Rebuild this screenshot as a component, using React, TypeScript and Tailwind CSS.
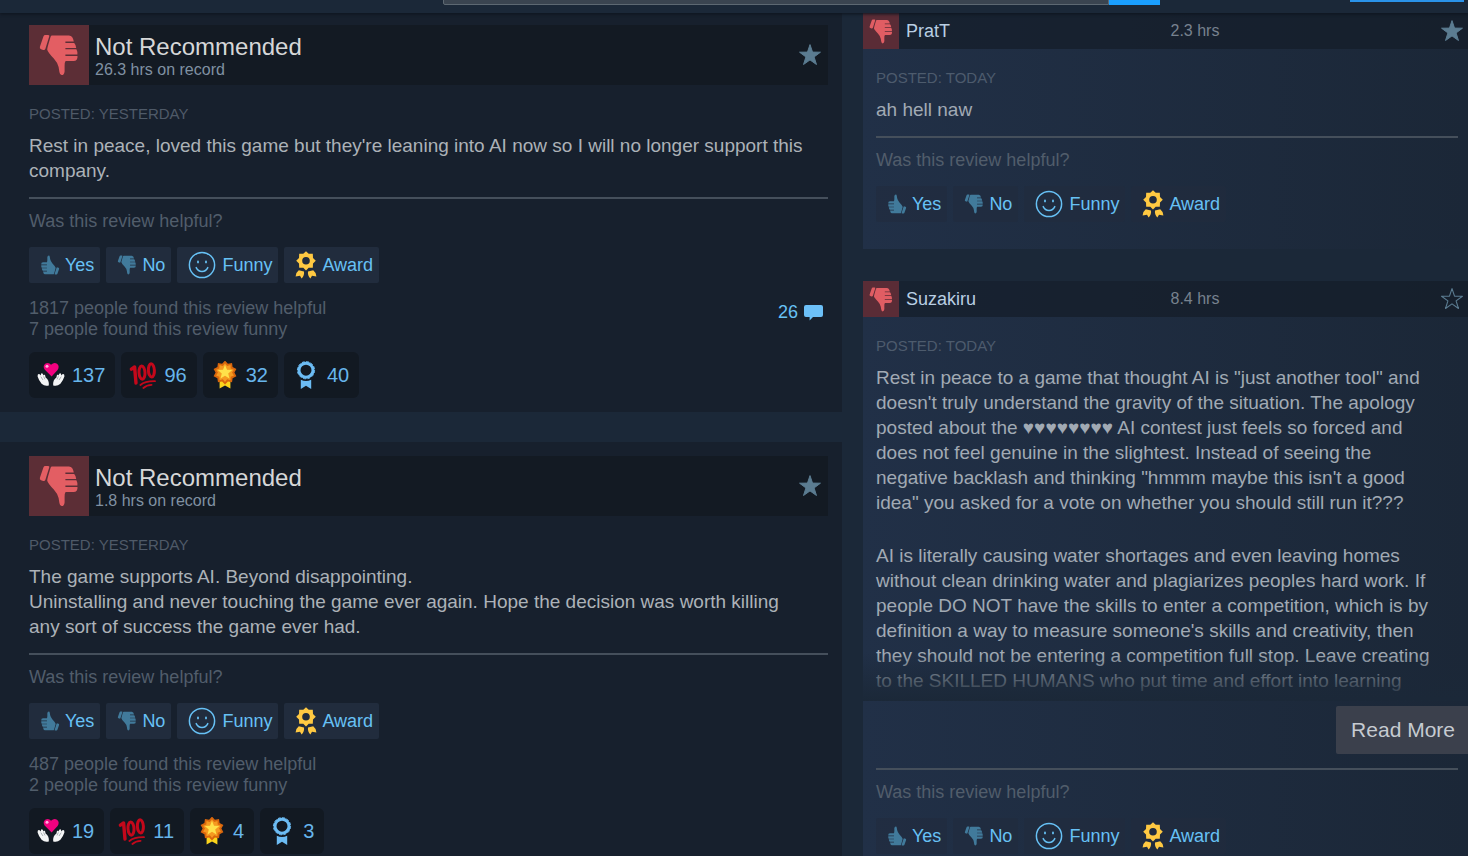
import type { ReactNode } from 'react';

type Award = { kind: 'care' | 'hundred' | 'medal' | 'ribbon'; count: number };

const starPoints = (count: number, outer: number, inner: number, cx: number, cy: number) =>
    Array.from({ length: count * 2 }, (_, i) => {
        const r = i % 2 === 0 ? outer : inner;
        const a = (Math.PI * i) / count - Math.PI / 2;
        return `${(cx + r * Math.cos(a)).toFixed(2)},${(cy + r * Math.sin(a)).toFixed(2)}`;
    }).join(' ');

function Thumb({ className }: { className: string }) {
    return (
        <svg viewBox="10 10 40 42" className={className} fill="currentColor" aria-hidden="true">
            <path d="M16.4 11H19.2Q20.8 11 20.2 12.6L16.4 24.8Q15.8 26.4 14.2 26L12 25.2Q10.4 24.6 10.9 22.8L14.4 12.4Q14.9 11 16.4 11Z" />
            <path d="M23 11.6H40Q43.8 11.8 44.8 17.6H36.4V18.9H45.2Q46.8 20.2 47.2 24H36.4V25.3H47.4Q48.6 27.4 48.4 30.6H36.4V31.9H48.5Q48.8 37 44.6 37H36.6Q35.4 38.4 35.6 42V47.4Q35.2 51 32.6 51Q30.8 51 30.4 48L29.6 43Q28.6 38.6 24.8 34.4Q18.6 28 18.2 25.4Q18.2 24 21.6 12.8Q22 11.6 23 11.6Z" />
        </svg>
    );
}

function Star({ outline }: { outline?: boolean }) {
    return (
        <svg
            viewBox="0 0 24 24"
            className="size-6 shrink-0 text-[#5b7c91]"
            fill={outline ? 'none' : 'currentColor'}
            stroke="currentColor"
            strokeWidth={outline ? 1.1 : 1}
            strokeLinejoin="round"
            aria-hidden="true"
        >
            <polygon points={starPoints(5, 11, 4.3, 12, 12.6)} />
        </svg>
    );
}

function Smiley() {
    return (
        <svg viewBox="0 0 28 28" className="size-7" fill="none" stroke="currentColor" strokeWidth="1.5" strokeLinecap="round" aria-hidden="true">
            <circle cx="14" cy="14" r="12.6" />
            <path d="M8.2 16.6Q10 20.4 14 20.4T19.8 16.6" />
            <path d="M10 10.4V11.4M18 10.4V11.4" strokeWidth="1.8" />
        </svg>
    );
}

function AwardRosette() {
    return (
        <svg viewBox="0 0 22 28" className="h-7 w-[22px]" fill="#ffc942" aria-hidden="true">
            <path
                fillRule="evenodd"
                d="M11 0.2L13.7 2.8L17.8 2.8L18 7L20.8 9.8L18 12.6L17.8 16.8L13.7 16.8L11 19.4L8.3 16.8L4.2 16.8L4 12.6L1.2 9.8L4 7L4.2 2.8L8.3 2.8ZM11 6A3.8 3.8 0 1 0 11 13.6A3.8 3.8 0 1 0 11 6Z"
            />
            <path d="M3.8 19.2L9 20.6Q9.6 24.6 6.6 27.6L5 24.8L0.6 25.4Q0.8 21.4 3.8 19.2ZM18.2 19.2L13 20.6Q12.4 24.6 15.4 27.6L17 24.8L21.4 25.4Q21.2 21.4 18.2 19.2Z" />
        </svg>
    );
}

function AwardIcon({ kind }: { kind: Award['kind'] }) {
    if (kind === 'care') {
        return (
            <svg viewBox="0 0 28 28" className="size-7" aria-hidden="true">
                <path d="M14.6 15.6L7.6 8.6Q5.4 4.6 8.6 2.6Q11.8 1 14 3.8Q17.2 0.8 20 2.8Q23 5.4 20.6 9Z" fill="#f2017f" />
                <circle cx="10" cy="5.2" r="1.5" fill="#ffb0dc" />
                <path
                    d="M1.6 13Q3 12.6 3.6 14.6L4.2 12.4Q6 12 6.4 14.6L7 13.4Q8.4 13.6 8.6 16.4Q12.4 19 11.8 24.4Q8 25.8 4.6 22.8Q1.8 19.6 0.6 15.6Q0.4 13.4 1.6 13ZM26.4 13Q25 12.6 24.4 14.6L23.8 12.4Q22 12 21.6 14.6L21 13.4Q19.6 13.6 19.4 16.4Q15.6 19 16.2 24.4Q20 25.8 23.4 22.8Q26.2 19.6 27.4 15.6Q27.6 13.4 26.4 13Z"
                    fill="#f4f5f6"
                />
                <path d="M3.8 15.6L6 19M6.6 15.4L8 18.4M24.2 15.6L22 19M21.4 15.4L20 18.4" stroke="#8b9298" strokeWidth="0.7" />
            </svg>
        );
    }
    if (kind === 'hundred') {
        return (
            <svg viewBox="0 0 28 28" className="size-7" fill="none" stroke="#c4081b" strokeLinecap="round" strokeLinejoin="round" aria-hidden="true">
                <path d="M2.4 8.2L5.6 6L7 22" strokeWidth="3.4" />
                <ellipse cx="13" cy="11.6" rx="3" ry="6.6" strokeWidth="3" transform="rotate(-3 13 11.6)" />
                <ellipse cx="22.4" cy="9.4" rx="3" ry="6.6" strokeWidth="3" transform="rotate(-3 22.4 9.4)" />
                <path d="M11.4 24Q16 20 26 20.2M14.4 27Q17.6 24 22.6 23.8" strokeWidth="1.8" />
            </svg>
        );
    }
    if (kind === 'medal') {
        return (
            <svg viewBox="0 0 28 28" className="size-7" aria-hidden="true">
                <path d="M8.6 17H19.4V27.6L14 24.6L8.6 27.6Z" fill="#fbd51c" />
                <polygon points={starPoints(10, 12, 9.4, 14, 11.6)} fill="#d9660c" />
                <polygon points={starPoints(10, 9.4, 7, 14, 11.6)} fill="#f59a20" />
                <polygon points={starPoints(5, 7.6, 3.4, 14, 11.4)} fill="#ffe14a" />
            </svg>
        );
    }
    return (
        <svg viewBox="0 0 28 28" className="size-7" fill="#6cbcf4" aria-hidden="true">
            <circle cx="14" cy="9.2" r="7" fill="none" stroke="#6cbcf4" strokeWidth="3" />
            <circle cx="14" cy="9.2" r="8.6" fill="none" stroke="#6cbcf4" strokeWidth="1" strokeDasharray="2.8 1.7" />
            <path d="M8.8 18.8Q14 21.2 19.2 18.8V28L14 24.8L8.8 28Z" />
        </svg>
    );
}

function VoteButton({ children, side }: { children: ReactNode; side?: boolean }) {
    return (
        <button
            type="button"
            className={`flex h-9 items-center gap-[5px] rounded-xs pr-[6px] pl-[11px] text-[18px] text-[#67c1f5] ${side ? 'bg-[#212c3d]/60' : 'bg-[#212c3d]'}`}
        >
            {children}
        </button>
    );
}

function VoteControls({ side }: { side?: boolean }) {
    return (
        <div className="mt-[14px] border-t-2 border-[#454f5b] pt-3">
            <p className="text-[18px] leading-5 text-[#515d6b]">Was this review helpful?</p>
            <div className="mt-4 flex gap-[6px]">
                <VoteButton side={side}>
                    <Thumb className="size-5 rotate-180 text-[#417a9b]" />
                    Yes
                </VoteButton>
                <VoteButton side={side}>
                    <Thumb className="size-5 text-[#417a9b]" />
                    No
                </VoteButton>
                <VoteButton side={side}>
                    <Smiley />
                    <span className="pl-px">Funny</span>
                </VoteButton>
                <VoteButton side={side}>
                    <AwardRosette />
                    Award
                </VoteButton>
            </div>
        </div>
    );
}

type ReviewProps = {
    hours: string;
    helpful: number;
    funny: number;
    comments?: number;
    awards: Award[];
    children: ReactNode;
    className: string;
};

function Review({ hours, helpful, funny, comments, awards, children, className }: ReviewProps) {
    return (
        <article className={`bg-[#17202d] pr-[14px] pb-[14px] pl-[29px] ${className}`}>
            <header className="flex items-center bg-[#131a23] pr-[6px]">
                <div className="flex size-[60px] items-center justify-center bg-[#5c2e36]">
                    <Thumb className="h-[42px] w-10 text-[#e35e63]" />
                </div>
                <div className="flex-1 pt-1 pl-[6px]">
                    <h2 className="text-2xl leading-[26px] text-[#d6d7d8]">Not Recommended</h2>
                    <p className="text-[16px] leading-5 text-[#8091a2]">{hours} hrs on record</p>
                </div>
                <Star />
            </header>
            <p className="mt-[19px] text-[15px] leading-5 text-[#4f5a68]">POSTED: YESTERDAY</p>
            <div className="mt-[9px] pr-4 text-[19px] leading-[25px] text-[#acb2b8]">{children}</div>
            <VoteControls />
            <div className="mt-[15px] flex items-start text-[18px] leading-[21px] text-[#515d6b]">
                <p className="flex-1">
                    {helpful} people found this review helpful
                    <br />
                    {funny} people found this review funny
                </p>
                {comments && (
                    <a href="#comments" className="mt-1 flex items-center gap-[6px] pr-[5px] text-[#67c1f5]">
                        {comments}
                        <svg viewBox="0 0 19 17" className="h-[17px] w-[19px]" fill="#6cc0f8" aria-hidden="true">
                            <path d="M2 1H17Q19 1 19 3V11Q19 13 17 13H9L5.6 16.6V13H2Q0 13 0 11V3Q0 1 2 1Z" />
                        </svg>
                    </a>
                )}
            </div>
            <div className="mt-3 flex gap-[6px]">
                {awards.map((award) => (
                    <button
                        key={award.kind}
                        type="button"
                        className="flex h-[46px] items-center gap-[7px] rounded-md bg-[#121922] pr-[10px] pl-2 text-[20px] text-[#67b5ec]"
                    >
                        <AwardIcon kind={award.kind} />
                        {award.count}
                    </button>
                ))}
            </div>
        </article>
    );
}

type ShortReviewProps = {
    name: string;
    hours: string;
    outline?: boolean;
    more?: boolean;
    children: ReactNode;
};

function ShortReview({ name, hours, outline, more, children }: ShortReviewProps) {
    return (
        <article className="bg-linear-to-r from-[#213047] to-[#1b2737] pb-[27px]">
            <header className="grid grid-cols-2 items-center bg-[#141d28]/70 text-[18px]">
                <div className="flex items-center">
                    <div className="flex size-9 items-center justify-center bg-[#5a2c36]">
                        <Thumb className="h-[25px] w-6 text-[#e05d63]" />
                    </div>
                    <a href="#profile" className="pl-[7px] text-[#b9cfe3]">
                        {name}
                    </a>
                </div>
                <div className="flex items-center justify-between pr-1 pl-[5px]">
                    <span className="text-[16px] text-[#77828f]">{hours} hrs</span>
                    <Star outline={outline} />
                </div>
            </header>
            <p className="mt-[19px] pl-[13px] text-[15px] leading-5 text-[#4d5b6d]">POSTED: TODAY</p>
            <div className={`relative mt-[9px] pr-[22px] pl-[13px] text-[19px] leading-[25px] text-[#a1aab4] ${more ? 'pb-2' : ''}`}>
                <div className="space-y-7">{children}</div>
                {more && <div className="absolute inset-x-0 bottom-0 h-12 bg-linear-to-b from-transparent to-[#1b2838]" />}
            </div>
            {more && (
                <div className="mt-[5px] flex justify-end">
                    <button type="button" className="h-12 rounded-l-xs bg-[#3b404c] pr-[13px] pl-[15px] text-[21px] text-[#c6cbd1]">
                        Read More
                    </button>
                </div>
            )}
            <div className="pr-[10px] pl-[13px]">
                <VoteControls side />
            </div>
        </article>
    );
}

export default function App() {
    return (
        <div className="flex h-screen flex-col overflow-hidden bg-[#1b2838] font-['Liberation_Sans',Arial,sans-serif]">
            <header className="relative flex h-[13px] shrink-0 items-end pl-[443px] shadow-[0_1px_3px_#0d141d]">
                <input
                    type="text"
                    aria-label="Search"
                    className="mb-2 h-9 w-[666px] shrink-0 rounded-bl-xs border border-[#5d6872] bg-[#3a4450]"
                />
                <button type="button" aria-label="Submit search" className="mb-2 h-9 w-[51px] shrink-0 bg-[#1a9fff]" />
                <button type="button" aria-label="Options" className="mr-1 mb-[11px] ml-auto h-9 w-[114px] shrink-0 bg-[#2a93ea]" />
            </header>

            <main className="grid min-h-0 flex-1 grid-cols-[842fr_605fr] gap-[21px]">
                <div className="flex flex-col gap-[30px]">
                    <Review
                        className="pt-3"
                        hours="26.3"
                        helpful={1817}
                        funny={7}
                        comments={26}
                        awards={[
                            { kind: 'care', count: 137 },
                            { kind: 'hundred', count: 96 },
                            { kind: 'medal', count: 32 },
                            { kind: 'ribbon', count: 40 },
                        ]}
                    >
                        <p>Rest in peace, loved this game but they're leaning into AI now so I will no longer support this company.</p>
                    </Review>
                    <Review
                        className="pt-[14px]"
                        hours="1.8"
                        helpful={487}
                        funny={2}
                        awards={[
                            { kind: 'care', count: 19 },
                            { kind: 'hundred', count: 11 },
                            { kind: 'medal', count: 4 },
                            { kind: 'ribbon', count: 3 },
                        ]}
                    >
                        <p>
                            The game supports AI. Beyond disappointing.
                            <br />
                            Uninstalling and never touching the game ever again. Hope the decision was worth killing any sort of success the game ever had.
                        </p>
                    </Review>
                </div>

                <div className="flex flex-col gap-8">
                    <ShortReview name="PratT" hours="2.3">
                        <p>ah hell naw</p>
                    </ShortReview>
                    <ShortReview name="Suzakiru" hours="8.4" outline more>
                        <p>
                            Rest in peace to a game that thought AI is "just another tool" and doesn't truly understand the gravity of the situation. The apology posted about the ♥♥♥♥♥♥♥♥ AI contest just feels so forced and does not feel genuine in the slightest. Instead of seeing the negative backlash and thinking "hmmm maybe this isn't a good idea" you asked for a vote on whether you should still run it???
                        </p>
                        <p>
                            AI is literally causing water shortages and even leaving homes without clean drinking water and plagiarizes peoples hard work. If people DO NOT have the skills to enter a competition, which is by definition a way to measure someone's skills and creativity, then they should not be entering a competition full stop. Leave creating to the SKILLED HUMANS who put time and effort into learning
                        </p>
                    </ShortReview>
                </div>
            </main>
        </div>
    );
}
